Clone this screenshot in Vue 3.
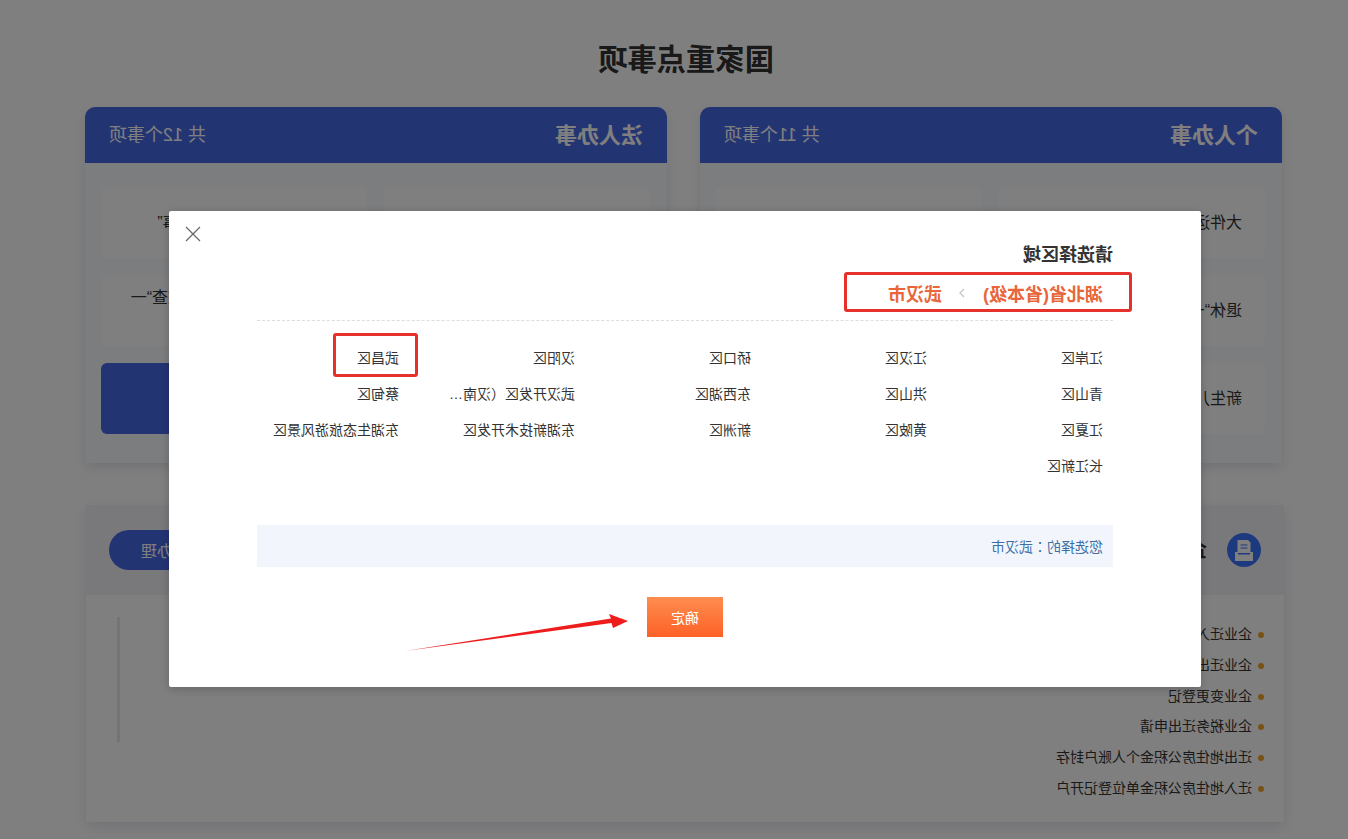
<script setup>
const personal = ['大件运输“一件事”', '水电气网报装“一件事”', '退休“一件事”', '残疾人服务“一件事”', '新生儿出生“一件事”', '教育入学“一件事”']
const legal = ['开办运输企业“一件事”', '水电气网联合报装“一件事”', '企业信息变更“一件事”', '企业破产清算信息联合核查“一件事”', '信用修复“一件事”', '更多事项']
const tasks = ['企业迁入登记', '企业迁出登记', '企业变更登记', '企业税务迁出申请', '迁出地住房公积金个人账户封存', '迁入地住房公积金单位登记开户']
const districts = ['江岸区', '江汉区', '硚口区', '汉阳区', '武昌区', '青山区', '洪山区', '东西湖区', '武汉开发区（汉南区）', '蔡甸区', '江夏区', '黄陂区', '新洲区', '东湖新技术开发区', '东湖生态旅游风景区', '长江新区']
</script>

<template>
  <div class="page">
    <main class="main">
      <h1 class="title">国家重点事项</h1>
      <div class="cols">
        <section class="card">
          <header class="card-head"><strong>个人办事</strong><span>共 11个事项</span></header>
          <div class="tiles">
            <div v-for="t in personal" :key="t" class="tile"><span>{{ t }}</span></div>
          </div>
        </section>
        <section class="card">
          <header class="card-head"><strong>法人办事</strong><span>共 12个事项</span></header>
          <div class="tiles">
            <div v-for="(t, i) in legal" :key="t" class="tile" :class="{ active: i === 5 }"><span>{{ t }}</span></div>
          </div>
        </section>
      </div>
      <section class="work">
        <header class="work-head">
          <svg class="work-icon" width="34" height="34" viewBox="0 0 34 34">
            <circle cx="17" cy="17" r="17" fill="#3c74ff" />
            <path d="M13 7h10.500v13h-13V9.500z" fill="#fff" />
            <path d="M13.500 12h7M13.500 15h7" stroke="#3c74ff" stroke-width="1.200" />
            <path d="M8 19h3v2.500h12V19h3v9H8z" fill="#fff" />
          </svg>
          <h2>企业迁移登记“一件事”</h2>
          <button class="pill">立即办理</button>
        </header>
        <div class="work-body">
          <ul class="tasks">
            <li v-for="t in tasks" :key="t">{{ t }}</li>
          </ul>
          <div class="rule"></div>
        </div>
      </section>
    </main>

    <div class="mask">
      <div class="modal">
        <svg class="close" width="16" height="16" viewBox="0 0 16 16">
          <path d="M1 1l14 14M15 1L1 15" stroke="#666" stroke-width="1.200" fill="none" />
        </svg>
        <h3>请选择区域</h3>
        <div class="crumbs">
          <span>湖北省(省本级)</span>
          <svg width="6" height="10" viewBox="0 0 6 10">
            <path d="M1 1l4 4-4 4" stroke="#c8c8c8" stroke-width="1.400" fill="none" />
          </svg>
          <span>武汉市</span>
          <i class="mark"></i>
        </div>
        <div class="grid">
          <div v-for="d in districts" :key="d" class="district" :class="{ marked: d === '武昌区' }">
            <span>{{ d }}</span>
          </div>
        </div>
        <div class="chosen">您选择的<span class="colon">：</span>武汉市</div>
        <div class="actions"><button class="ok">确定</button></div>
        <svg class="arrow" width="230" height="40" viewBox="0 0 230 40">
          <path d="M223 38L17 5.500L19 1L0 8L15 15L16.500 10Z" fill="#ee1c1c" />
        </svg>
      </div>
    </div>
  </div>
</template>

<style>
html, body { margin: 0; overflow: hidden; background: #fff; }
</style>

<style scoped>
.page {
  position: relative;
  width: 1348px;
  height: 839px;
  overflow: hidden;
  background: #fff;
  transform: scaleX(-1);
  font-family: "Liberation Sans", "Noto Sans CJK SC", sans-serif;
  color: #333;
}
.main { padding-left: 66px; width: 1197px; }
.title {
  margin: 0;
  padding: 40px 5px 27px 0;
  line-height: 40px;
  font-size: 29.300px;
  font-weight: 700;
  text-align: center;
  color: #333;
}
.cols { display: grid; grid-template-columns: 582px 582px; gap: 33px; }
.card {
  height: 356px;
  border-radius: 10px 10px 0 0;
  background: #f9fafe;
  box-shadow: 0 5px 12px rgba(60, 70, 120, 0.14);
}
.card-head {
  display: flex;
  align-items: center;
  justify-content: space-between;
  box-sizing: border-box;
  height: 56px;
  padding: 0 24px 4px;
  background: #4668e6;
  color: #fff;
  border-radius: 10px 10px 0 0;
}
.card-head strong { font-size: 22px; }
.card-head span { font-size: 18px; }
.tiles {
  display: grid;
  grid-template-columns: 266px 266px;
  gap: 17px;
  padding: 24px 17px;
}
.tile {
  box-sizing: border-box;
  display: flex;
  align-items: center;
  height: 71px;
  padding: 0 25px 0 23px;
  line-height: 26px;
  border-radius: 6px;
  background: #fff;
  font-size: 16px;
  overflow: hidden;
}
.tile.active { background: #4668e6; color: #fff; }
.work { margin: 42px 0 0 -2px; width: 1198px; box-shadow: 0 5px 12px rgba(60, 70, 120, 0.14); }
.work-head {
  display: flex;
  align-items: center;
  height: 90px;
  padding: 0 23px;
  background: #f2f3f9;
}
.work-icon { flex: none; }
.work-head h2 { margin: 0 0 3px 20px; font-size: 20px; font-weight: 700; }
.pill {
  margin-left: auto;
  width: 128px;
  height: 40px;
  border: 0;
  border-radius: 20px;
  background: #4668e6;
  color: #fff;
  font: inherit;
  font-size: 16px;
}
.work-body {
  position: relative;
  height: 227px;
  background: #fff;
}
.tasks {
  margin: 0;
  padding: 24px 0 0 32px;
  list-style: none;
  font-size: 14px;
  line-height: 30.800px;
  color: #333;
}
.tasks li { position: relative; }
.tasks li::before {
  content: "";
  position: absolute;
  left: -12px;
  top: 13px;
  width: 6px;
  height: 6px;
  border-radius: 50%;
  background: #f0a32b;
}
.rule {
  position: absolute;
  left: 1164px;
  top: 22px;
  width: 3px;
  height: 125px;
  background: #e6e7f0;
}
.mask {
  position: absolute;
  inset: 0;
  padding: 211px 0 0 147px;
  background: rgba(0, 0, 0, 0.5);
}
.modal {
  position: relative;
  box-sizing: border-box;
  width: 1032px;
  height: 476px;
  padding: 32px 88px 0;
  background: #fff;
  border-radius: 2px;
  box-shadow: 0 2px 10px rgba(0, 0, 0, 0.2);
}
.close { position: absolute; right: 16px; top: 15px; }
h3 { margin: 0; font-size: 18px; line-height: 24px; font-weight: 700; color: #333; }
.crumbs {
  position: relative;
  display: flex;
  align-items: center;
  gap: 17.500px;
  box-sizing: border-box;
  height: 54px;
  padding: 0 10px 2px;
  margin-bottom: 19px;
  border-bottom: 1px dashed #ddd;
  font-size: 18px;
  font-weight: 700;
  color: #e8663a;
}
.mark {
  position: absolute;
  left: -19px;
  top: 5px;
  width: 288px;
  height: 40px;
  box-sizing: border-box;
  border: 3px solid #e4312b;
  border-radius: 3px;
}
.grid {
  display: grid;
  grid-template-columns: repeat(5, 176px);
  grid-auto-rows: 36px;
  height: 185px;
  padding-left: 10px;
}
.district {
  position: relative;
  font-size: 14px;
  line-height: 36px;
  color: #333;
}
.district span {
  display: block;
  max-width: 126px;
  white-space: nowrap;
  overflow: hidden;
  text-overflow: ellipsis;
}
.district.marked::after {
  content: "";
  position: absolute;
  left: -19px;
  top: -7px;
  width: 85px;
  height: 44px;
  box-sizing: border-box;
  border: 3px solid #e4312b;
  border-radius: 3px;
}
.chosen {
  height: 42px;
  line-height: 43px;
  padding-left: 10px;
  background: #f2f5fc;
  font-size: 14px;
  color: #3a6ea5;
}
.colon { font-family: "Noto Sans CJK TC", sans-serif; }
.actions { display: flex; justify-content: center; margin-top: 30px; }
.ok {
  width: 76px;
  height: 40px;
  border: 0;
  background: linear-gradient(180deg, #ff8d4f, #fc6127);
  color: #fff;
  font: inherit;
  font-size: 14px;
}
.arrow { position: absolute; left: 573px; top: 402px; }
</style>
